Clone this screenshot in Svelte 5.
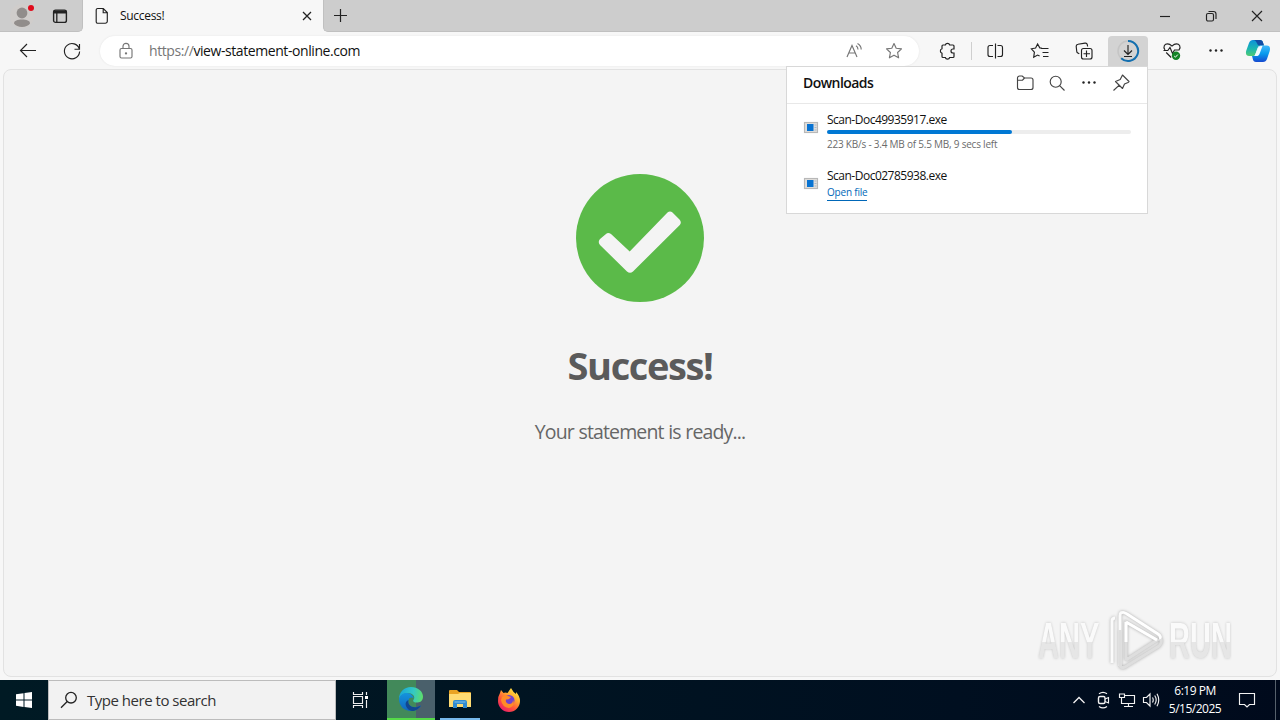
<script>
  const downloads = [
    { name: 'Scan-Doc49935917.exe', progress: 61, status: '223 KB/s - 3.4 MB of 5.5 MB, 9 secs left' },
    { name: 'Scan-Doc02785938.exe', action: 'Open file' }
  ];
</script>

{#snippet dots()}
  <svg class="solid" width="20" height="20" viewBox="0 0 20 20"><circle cx="4.500" cy="9.500" r="1.200" /><circle cx="10" cy="9.500" r="1.200" /><circle cx="15.500" cy="9.500" r="1.200" /></svg>
{/snippet}

<div class="screen">
  <header class="tabs">
    <div class="corner">
      <svg width="28" height="32" viewBox="0 0 28 32" class="profile">
        <circle cx="14" cy="16" r="12" fill="#d0cdcb" />
        <circle cx="14" cy="13" r="5.400" fill="#918d8b" />
        <path d="M6 23.500c0-3 3.500-4 8-4s8 1 8 4c-1.500 2.300-4.500 3.400-8 3.400s-6.500-1.100-8-3.400z" fill="#918d8b" />
        <circle cx="23" cy="8" r="3" fill="#e00b1c" />
      </svg>
      <svg width="16" height="16" viewBox="0 0 16 16" class="workspace">
        <rect x="1.600" y="2.100" width="12.800" height="12.300" rx="2" stroke-width="1.400" />
        <path d="M1.600 4h12.800" stroke-width="3" /><path d="M4.800 4v10" stroke-width="1.300" />
      </svg>
    </div>
    <div class="tab">
      <svg width="14" height="18" viewBox="0 0 14 18" class="page"><path d="M2.700 1.500h5.600l4 4v8.700a2 2 0 0 1-2 2H2.700a1.500 1.500 0 0 1-1.500-1.500V3a1.500 1.500 0 0 1 1.500-1.500zM8.200 1.500v4.200h4.100" stroke-width="1.150" /></svg>
      <span class="tab-title">Success!</span>
      <svg width="10" height="10" viewBox="0 0 10 10" class="close"><path d="M1 1l8 8M9 1L1 9" stroke-width="1.250" /></svg>
    </div>
    <div class="rest">
      <svg width="15" height="15" viewBox="0 0 15 15"><path d="M7.500 1v13M1 7.500h13" stroke-width="1.200" /></svg>
      <div class="window-buttons">
        <svg width="12" height="12" viewBox="0 0 12 12"><path d="M1 6.500h10" /></svg>
        <svg width="12" height="12" viewBox="0 0 12 12"><rect x="1.500" y="3.500" width="7" height="7.500" rx="1.500" /><path d="M3.500 1.500h5a2.500 2.500 0 0 1 2.500 2.500v5" /></svg>
        <svg width="12" height="12" viewBox="0 0 12 12"><path d="M1 1l10 10M11 1L1 11" /></svg>
      </div>
    </div>
  </header>

  <nav class="toolbar">
    <span class="btn"><svg width="20" height="20" viewBox="0 0 20 20"><path d="M18 9.500H2.500M9 3L2.500 9.500 9 16" /></svg></span>
    <span class="btn"><svg width="20" height="20" viewBox="0 0 20 20"><path d="M17.300 8A7.600 7.600 0 1 0 17.600 10.500M17.500 3v5.200h-5" /></svg></span>
    <div class="address">
      <svg class="lock" width="16" height="18" viewBox="0 0 16 18"><rect x="2" y="6.500" width="12" height="9.500" rx="1.500" /><path d="M5 6.500V4.300a3 3 0 0 1 6 0v2.200" /><circle cx="8" cy="11.300" r=".6" /></svg>
      <span class="url"><i>https://</i>view-statement-online.com</span>
      <svg class="aloud" width="18" height="18" viewBox="0 0 18 18"><path d="M2 15L7 3.500 12 15M3.700 11h6.600M11 3.700c1.300.800 2 2 2 3.800M12.500 1.500c2.200 1.300 3.700 3.200 3.700 6" /></svg>
      <svg class="star" width="18" height="18" viewBox="0 0 18 18"><path d="M9 1.500l2.200 4.800 5.300.6-3.900 3.600 1 5.300L9 13.200l-4.600 2.600 1-5.300L1.500 6.900l5.300-.6z" stroke-linejoin="round" /></svg>
    </div>
    <span class="btn ext"><svg width="20" height="20" viewBox="0 0 20 20"><path d="M8.300 4a2.300 2.300 0 0 1 4.400 0h3.300a1 1 0 0 1 1 1v3h-1a2 2 0 0 0 0 4h1v3.500a1 1 0 0 1-1 1h-3.300a2.300 2.300 0 0 1-4.400 0H6a1 1 0 0 1-1-1v-3.300a2.300 2.300 0 0 1 0-4.400V5a1 1 0 0 1 1-1z" stroke-width="1.200" /></svg></span>
    <span class="divider"></span>
    <span class="btn split"><svg width="20" height="20" viewBox="0 0 20 20"><path d="M10.500 2.500v15M8 4.500H5a2 2 0 0 0-2 2v7a2 2 0 0 0 2 2h3M12.500 4.500h3a2 2 0 0 1 2 2v7a2 2 0 0 1-2 2h-3" /></svg></span>
    <span class="btn favs"><svg width="20" height="20" viewBox="0 0 20 20"><path d="M11 7.500h7.500M12.500 11.500h6M13 15.500h5.500M12 7.300l-2.200-.4-2.200-4-2 4.200-4.200.7 3 3.300-.7 5.200 3.900-2.200 2 1" /></svg></span>
    <span class="btn"><svg width="20" height="20" viewBox="0 0 20 20"><rect x="7.500" y="7.500" width="10.500" height="10.500" rx="2" /><path d="M12.500 9.500v6.500M9.500 12.700H16M5.300 12.800L3.800 12A2 2 0 0 1 2.700 10L2.200 5.500A2 2 0 0 1 4 3.300l7-1.200a2 2 0 0 1 2.300 1.600l.3 1.800" /></svg></span>
    <span class="btn active"><svg width="24" height="24" viewBox="0 0 24 24"><circle cx="12" cy="12" r="10" stroke="#c5c5c5" stroke-width="1.500" /><path d="M12 2a10 10 0 1 1-6.800 17.200" stroke="#1470b0" stroke-width="2" /><path d="M12 6v9M8 11.500l4 4 4-4M8 17.500h8" /></svg></span>
    <span class="btn"><svg width="20" height="20" viewBox="0 0 20 20"><path d="M3 9C.5 5.500 3 2.800 5.500 2.800 8 2.800 9 4 10 5c1-1 2-2.200 4.500-2.200S19.500 5.500 17 9M1.500 9.500h4.300L8 6.500l2.500 6 2-3.500h5M4.200 11.500l5 5" /><circle cx="14" cy="14.800" r="4.200" fill="#148327" stroke="none" /><path d="M12.200 15l1.200 1.200 2.400-2.600" stroke="#fff" stroke-width="1" /></svg></span>
    <span class="btn">{@render dots()}</span>
    <span class="btn copilot"><svg width="26" height="24" viewBox="0 0 26 24">
      <defs>
        <linearGradient id="cpA" x1="0" y1="0" x2="0" y2="1"><stop stop-color="#0b91db" /><stop offset=".55" stop-color="#1cb6b0" /><stop offset="1" stop-color="#51cb73" /></linearGradient>
        <linearGradient id="cpB" x1="0" y1="0" x2="0" y2="1"><stop stop-color="#40b9fb" /><stop offset=".5" stop-color="#079aed" /><stop offset="1" stop-color="#164ad0" /></linearGradient>
      </defs>
      <path d="M8 1h7c3 0 3 3 4 5.500h-3c-2.500 0-3 1.500-4 4L10.500 15c-.6 1.500-1.500 2-3 2H4c-3 0-3.500-3-2.700-5.500L4 4c.8-2 2-3 4-3z" fill="url(#cpA)" />
      <path d="M8 1h7c3 0 3 3 4 5.500h-5C12 6.500 12 1 8 1z" fill="#124ca5" />
      <path d="M18 23h-7c-3 0-3-3-4-6h1c2.500 0 3-1.500 4-4l1.500-4.500c.6-1.500 1.500-2 3-2H22c3 0 3.500 3 2.700 5.500L22 20c-.8 2-2 3-4 3z" fill="url(#cpB)" />
      <path d="M9.500 17l3.500-8c.5-1.200 1.200-2 3-2h1.500l-2.800 7.500c-.8 2-1.700 2.500-3.200 2.500z" fill="#f1faff" />
    </svg></span>
  </nav>

  <main class="viewport">
    <svg class="check" width="128" height="128" viewBox="0 0 128 128"><circle cx="64" cy="64" r="64" fill="#5bba49" /><path d="M24 65l6-5q2-2 5 0L53.700 77.500 91.500 38.500q2.500-2 5 0l7 7q2.500 3 .300 5.500L57 97.500q-3 2.500-6 0L24 71q-2.500-3 0-6z" fill="#f4f4f4" stroke="none" /></svg>
    <h1>Success!</h1>
    <p>Your statement is ready...</p>
  </main>

  <aside class="panel">
    <div class="panel-head">
      <b>Downloads</b>
      <span class="tools">
        <svg width="20" height="20" viewBox="0 0 20 20"><path d="M2.500 5a2 2 0 0 1 2-2h2.700l2.300 2h6.500a2 2 0 0 1 2 2v7.500a2 2 0 0 1-2 2H4.500a2 2 0 0 1-2-2zM2.500 7.200h5l2-2.200" /></svg>
        <svg width="20" height="20" viewBox="0 0 20 20"><circle cx="8.700" cy="8.700" r="5.500" /><path d="M12.600 12.600l4.900 4.900" /></svg>
        {@render dots()}
        <svg width="20" height="20" viewBox="0 0 20 20"><path d="M11.500 2l6.500 6.500-1 1-3.500 1.500-2 4.500-7-7 4.700-2L11 3zM8 12.300L2.500 17.500" stroke-linejoin="round" /></svg>
      </span>
    </div>
    {#each downloads as d}
      <div class="item">
        <svg width="16" height="14" viewBox="0 0 16 14"><rect x="1.500" y="1.500" width="13" height="10" fill="#e1dfdc" stroke="#b8b8b8" /><path d="M11.500 4h2M11.500 6.500h2M11.500 9h2" stroke="#a9b9ca" /><rect x="4" y="3" width="6.500" height="7" fill="#0873d2" stroke="none" /></svg>
        <div class="info">
          <span class="name">{d.name}</span>
          {#if d.status}
            <div class="bar"><div style="width: {d.progress}%"></div></div>
            <span class="status">{d.status}</span>
          {:else}
            <span class="link">{d.action}</span>
          {/if}
        </div>
      </div>
    {/each}
  </aside>

  <div class="watermark">
    <span class="any">ANY</span>
    <svg width="60" height="66" viewBox="0 0 60 66">
      <path d="M5 55V13q0-3 3-3M13 58V8q0-5 4-3" stroke="#fbfbfb" stroke-width="3" />
      <path d="M13 22v34q0 5 5 3L52 38q4-4 1-8M19 52V14L50 32 19 52" stroke="#dedede" stroke-width="3" />
      <path d="M16 5q1-1 4 1l31 20q4 3 1 4M19 14l31 18M19 14v20" stroke="#fff" stroke-width="3" />
    </svg>
    <span class="run">RUN</span>
  </div>

  <footer class="taskbar">
    <span class="start"><svg width="16" height="16" viewBox="0 0 16 16"><path d="M0 2.300L7.500 1.200V7.600H0zM8.500 1L16 0v7.600H8.500zM0 8.500h7.500V15L0 13.800zM8.500 8.500H16V16l-7.500-1z" fill="#fff" stroke="none" /></svg></span>
    <div class="search">
      <svg width="18" height="18" viewBox="0 0 18 18"><circle cx="11" cy="6.700" r="5.300" stroke-width="1.300" /><path d="M7.200 10.500L1 16.800" stroke-width="1.300" /></svg>
      <span>Type here to search</span>
    </div>
    <span class="app taskview"><svg width="18" height="18" viewBox="0 0 18 18"><path d="M2.500 1v2.500h9V1M2.500 17v-2.500h9V17M2.500 5.500h9v7h-9zM15.500 1v3M15.500 9v8" stroke="#eee" /><rect x="14" y="5" width="3" height="3" fill="#fff" stroke="none" /></svg></span>
    <span class="app edge"><svg width="24" height="24" viewBox="0 0 24 24">
      <defs><linearGradient id="egA" x1="0" y1=".3" x2="1" y2=".4"><stop stop-color="#17a5d8" /><stop offset=".6" stop-color="#34c9c4" /><stop offset="1" stop-color="#5cdd6c" /></linearGradient>
        <linearGradient id="egB" x1="0" y1="0" x2="0" y2="1"><stop stop-color="#1494dd" /><stop offset="1" stop-color="#1266bd" /></linearGradient></defs>
      <path d="M0 12C0 5 5 0 12 0s12 4.500 12 9.500-3.500 6-6.500 6-4-1.500-2.800-3C17 9 12.500 5.500 8 6 4 6.500 1 9 0 12z" fill="url(#egA)" />
      <path d="M0 12C1 7.500 5 5.800 8 6c4 .2 6.500 3 6.500 5.500-1-1.500-4-1.500-5 1.500-1.500 5 4.500 10 12.500 5.500-2.500 4-6 5.500-10 5.500C5 24 0 19 0 12z" fill="url(#egB)" />
      <path d="M9.500 13C8 18 14 23 22 18.500 19.500 22.500 16 24 13 24 7 23 4 15 9.500 13z" fill="#12468f" />
    </svg></span>
    <span class="app explorer"><svg width="22" height="20" viewBox="0 0 22 20"><path d="M0 2q0-1 1-1h7l2 2h11q1 0 1 1v13H0z" fill="#e9a323" /><path d="M0 5h9l2-1h11v14H0z" fill="#ffdb72" /><path d="M4 19v-6q0-2 2-2h10q2 0 2 2v6h-4v-4H8v4z" fill="#318bd0" /><path d="M5.500 13h11" stroke="#77bce8" /></svg></span>
    <span class="app firefox"><svg width="24" height="24" viewBox="0 0 24 24">
      <defs><linearGradient id="ffA" x1=".9" y1="0" x2=".2" y2="1"><stop stop-color="#fff44f" /><stop offset=".35" stop-color="#ffb02e" /><stop offset=".65" stop-color="#ff563b" /><stop offset="1" stop-color="#e8186c" /></linearGradient></defs>
      <path d="M3 5l1-3 2.500 3q2-.8 4 0L14 0q2 4 5 6V4q4 4 4 9A11 11 0 0 1 1 13Q1 8 3 5z" fill="url(#ffA)" />
      <circle cx="12" cy="12.500" r="5.500" fill="#7042cf" /><path d="M5 9q3-3 6-1l3 1q-2 3-5 2.500Q8 15 12 16q4 0 4-4 3 6-4 8-7-1-8-8z" fill="#ff8b27" />
    </svg></span>
    <div class="tray">
      <svg width="16" height="16" viewBox="0 0 16 16"><path d="M2.500 11L8 5.500l5.500 5.500" stroke-width="1.300" /></svg>
      <svg width="16" height="20" viewBox="0 0 16 20"><rect x="3.500" y="6.500" width="6.500" height="7" rx="1.500" stroke-width="1.400" /><path d="M10 9l3.500-1.500v5.500L10 11.500M4 3.800q4-2.800 8 0M4 16.500q4 2.800 8 0" /></svg>
      <svg width="18" height="18" viewBox="0 0 18 18"><path d="M6 4.500h10.500v8H5M10.500 12.500v3M6 15.500h9M1.500 3h5v3.500h-5zM3.500 6.500v6h2" /></svg>
      <svg width="18" height="18" viewBox="0 0 18 18"><path d="M1.500 6.500h3l3.500-3.500v12l-3.500-3.500h-3zM10.500 6.500q1.500 2.500 0 5M12.700 4.500q3 4.500 0 9M15 2.800q3.500 6.200 0 12.400" /></svg>
      <div class="clock"><span>6:19 PM</span><span>5/15/2025</span></div>
      <svg class="notice" width="18" height="18" viewBox="0 0 18 18"><path d="M1.500 2.500h15v11h-5L9 16l-2.500-2.500h-5z" /></svg>
      <span class="peek"></span>
    </div>
  </footer>
</div>

<style>
  :global(body) { margin: 0; overflow: hidden; }
  * { box-sizing: border-box; }
  svg { display: block; flex: none; fill: none; stroke: #222; stroke-width: 1.15; }
  .solid { fill: #222; stroke: none; }
  .screen { position: relative; width: 1280px; height: 720px; display: flex; flex-direction: column; background: #f7f7f7; font-family: "Open Sans", "Noto Sans", sans-serif; color: #111; white-space: nowrap; }

  .tabs { height: 32px; display: flex; background: #f7f7f7; }
  .corner { width: 83px; background: #cdcdcd; border: solid #c0c0c0; border-width: 0 1px 1px 0; border-radius: 0 0 5px; display: flex; align-items: center; padding-left: 8px; }
  .profile { stroke: none; }
  .workspace { margin-left: 16px; }
  .tab { width: 240px; display: flex; align-items: center; padding: 0 11px 0 12px; }
  .tab-title { font-size: 12px; line-height: 17px; padding-bottom: 1px; letter-spacing: -.3px; margin-left: 11px; flex: 1; }
  .rest { flex: 1; display: flex; align-items: center; justify-content: space-between; padding: 0 17px 0 9px; background: #cdcdcd; border: solid #c0c0c0; border-width: 0 0 1px 1px; border-radius: 0 0 0 5px; }
  .window-buttons { display: flex; gap: 34px; }

  .toolbar { height: 37px; display: flex; gap: 4px; padding: 4px 0 3px 8px; }
  .btn { width: 40px; height: 30px; display: flex; align-items: center; justify-content: center; border-radius: 4px; }
  .address { width: 819px; height: 30px; margin-left: 4px; display: flex; align-items: center; padding: 0 16px 0 18px; border-radius: 15px; background: #fff; box-shadow: 0 0 2px #e2e2e2; }
  .address svg { stroke: #767676; }
  .url { flex: 1; margin-left: 15px; padding-bottom: 1px; font-size: 14px; letter-spacing: -.42px; }
  .url i { font-style: normal; color: #767676; }
  .star { margin-left: 22px; }
  .ext { margin-left: 4px; }
  .divider { width: 1px; height: 18px; margin: 6px 0 0; background: #cfcfcf; }
  .split { margin-left: -1px; }
  .favs { margin-left: 1px; }
  .active { background: #d3d3d3; border-radius: 4px 4px 0 0; }
  .copilot { margin-left: -2px; }
  .copilot svg, .edge svg, .explorer svg, .firefox svg { stroke: none; }

  .viewport { height: 608px; margin: 0 3px; display: flex; flex-direction: column; align-items: center; padding-top: 104px; background: #f4f4f4; border: 1px solid #e2e2e2; border-radius: 8px; color: #5b5b5b; }
  .check { stroke: none; }
  h1 { margin: 35px 0 0; font-size: 38px; line-height: 56px; letter-spacing: -1.4px; font-weight: 700; }
  p { margin: 23px 0 0; font-size: 19.500px; line-height: 32px; letter-spacing: -.88px; word-spacing: .500px; color: #666; }

  .panel { position: absolute; left: 786px; top: 66px; width: 362px; height: 148px; background: #fff; border: 1px solid #d8d8d8; }
  .panel-head { height: 37px; display: flex; align-items: center; justify-content: space-between; padding: 0 16px 5px 16px; border-bottom: 1px solid #e8e8e8; }
  .panel-head b { font-size: 14px; font-weight: 600; letter-spacing: -.55px; }
  .tools { display: flex; gap: 12px; }
  .tools svg:not(.solid) { stroke: #444; }
  .item { height: 56px; display: flex; align-items: center; gap: 8px; padding: 0 16px; }
  .item svg { margin-top: -8px; }
  .info { flex: 1; height: 50px; display: flex; flex-direction: column; align-items: flex-start; padding-top: 4px; }
  .name { font-size: 12px; line-height: 17px; height: 19px; letter-spacing: -.5px; }
  .bar { width: 100%; height: 4px; border-radius: 2px; background: #ededed; }
  .bar div { height: 4px; border-radius: 2px; background: #0078d4; }
  .status { margin-top: 3px; font-size: 10px; line-height: 15px; letter-spacing: -.22px; color: #6b6b6b; }
  .link { font-size: 10px; line-height: 13px; padding-bottom: 1px; letter-spacing: -.2px; color: #0067b8; border-bottom: 1px solid #0067b8; }

  .watermark { position: absolute; left: 1038px; top: 608px; display: flex; align-items: center; height: 66px; font: 700 50px/66px "Liberation Sans", sans-serif; }
  .watermark svg { filter: drop-shadow(0 0 1.500px #aaa); margin-left: 3px; }
  .any, .run { display: block; width: 108px; margin-right: -42px; transform: scaleX(.58); transform-origin: left; color: transparent; background: linear-gradient(#fafafa 52%, #e6e6e6 52%); -webkit-background-clip: text; background-clip: text; filter: drop-shadow(0 0 1.500px #c4c4c4); }
  .run { margin-left: 2px; }

  .taskbar { margin-top: 3px; height: 40px; display: flex; background: linear-gradient(90deg, #001a24, #000f20 75%, #000a1c); }
  .start { width: 48px; display: flex; align-items: center; justify-content: center; }
  .search { width: 288px; display: flex; align-items: center; gap: 9px; padding-left: 11px; background: #f2f2f2; border: 1px solid #bcbcbc; color: #333; font-size: 15px; letter-spacing: -.48px; }
  .app { width: 48px; display: flex; align-items: center; justify-content: center; }
  .edge { margin-left: 3px; background: linear-gradient(90deg, #42895a 60%, #4a606b 60%); border-bottom: 2px solid #55da48; }
  .explorer { width: 40px; margin-left: 5px; border-bottom: 2px solid #76b9ed; }
  .firefox { margin-left: 5px; }
  .tray { flex: 1; display: flex; align-items: center; justify-content: flex-end; gap: 8px; }
  .tray svg { stroke: #f2f2f2; }
  .tray svg:nth-child(3), .tray svg:nth-child(4) { margin: 0 -1px; }
  .clock { width: 60px; margin-left: -2px; display: flex; flex-direction: column; align-items: center; color: #fff; font-size: 12px; line-height: 18px; letter-spacing: -.5px; }
  .notice { margin-left: 5px; }
  .peek { width: 5px; height: 40px; margin-left: 11px; border-left: 1px solid #56616c; }
</style>
